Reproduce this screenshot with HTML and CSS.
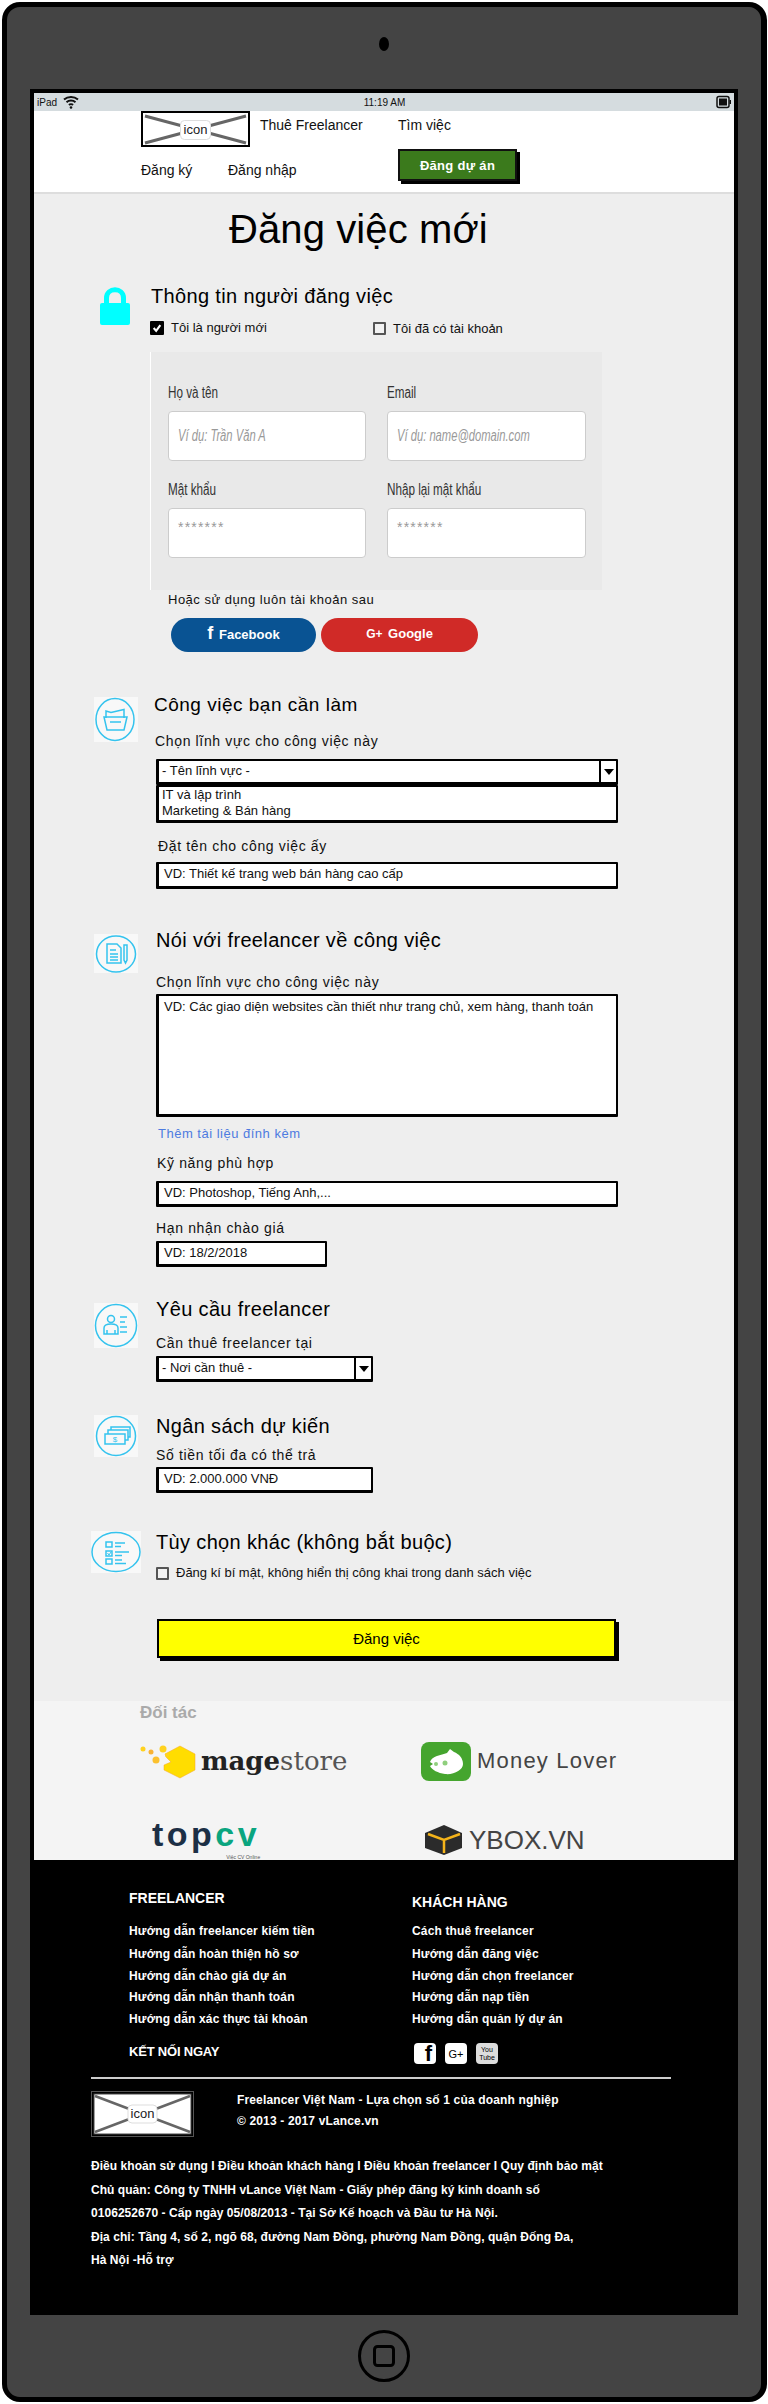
FILE: index.html
```html
<!DOCTYPE html>
<html lang="vi">
<head>
    <meta charset="UTF-8">
    <meta name="viewport" content="width=device-width, initial-scale=1.0">
    <title>Đăng việc mới</title>
    <link rel="stylesheet" href="styles.css">
</head>
<body>
<div class="device">
    <div class="device-top"><span class="camera"></span></div>
    <div class="screen">
        <div class="statusbar">
            <div class="status-left">
                <span>iPad</span>
                <svg width="16" height="14" viewBox="0 0 16 14"><path d="M1 4.5C5 1 11 1 15 4.5M3.5 7.2C6 5 10 5 12.5 7.2M6 10C7 9 9 9 10 10" fill="none" stroke="#111" stroke-width="2"/><circle cx="8" cy="12.5" r="1.3" fill="#111"/></svg>
            </div>
            <span class="status-time">11:19 AM</span>
            <svg class="battery" width="15" height="14" viewBox="0 0 15 14"><rect x="1" y="1.5" width="12" height="11" rx="2" fill="none" stroke="#111" stroke-width="1.5"/><rect x="3" y="3.5" width="8" height="7" fill="#111"/><rect x="13.5" y="5" width="1.5" height="4" fill="#111"/></svg>
        </div>

        <header class="topbar">
            <div class="topbar-row">
                <svg class="logo" width="109" height="36" viewBox="0 0 109 36">
                    <rect x="1" y="1" width="107" height="34" fill="#fff" stroke="#000" stroke-width="2"/>
                    <path d="M4 5L105 32M4 32L105 5" stroke="#666" stroke-width="3"/>
                    <rect x="39.5" y="9.5" width="30" height="19" rx="4" fill="#fff" stroke="#ddd"/>
                    <text x="54.5" y="23" text-anchor="middle" class="logo-text">icon</text>
                </svg>
                <a class="nav-link nav-hire">Thuê Freelancer</a>
                <a class="nav-link">Tìm việc</a>
            </div>
            <div class="topbar-row row-two">
                <a class="nav-link nav-signup">Đăng ký</a>
                <a class="nav-link nav-login">Đăng nhập</a>
                <button class="post-btn">Đăng dự án</button>
            </div>
        </header>

        <main class="content">
            <h1 class="page-title">Đăng việc mới</h1>

            <section class="sec sec-account">
                <svg class="lock" width="30" height="38" viewBox="0 0 30 38"><path d="M6.5 18V11C6.5 0 23.5 0 23.5 11V18" fill="none" stroke="#0ff" stroke-width="5"/><rect x="0" y="16" width="30" height="22" rx="2" fill="#0ff"/></svg>
                <div class="sec-body">
                    <h2 class="sec-title title-account">Thông tin người đăng việc</h2>
                    <div class="account-checks">
                        <label class="check small"><span class="box box-on"><svg width="12" height="12" viewBox="0 0 12 12"><path d="M2 6L5 9.5L10 2.5" fill="none" stroke="#fff" stroke-width="2.5"/></svg></span>Tôi là người mới</label>
                        <label class="check small check-old"><span class="box"></span>Tôi đã có tài khoản</label>
                    </div>
                    <div class="account-panel">
                        <div class="field">
                            <label>Họ và tên</label>
                            <div class="soft-input"><span class="ph">Ví dụ: Trần Văn A</span></div>
                        </div>
                        <div class="field">
                            <label>Email</label>
                            <div class="soft-input"><span class="ph">Ví dụ: name@domain.com</span></div>
                        </div>
                        <div class="field">
                            <label>Mật khẩu</label>
                            <div class="soft-input stars">*******</div>
                        </div>
                        <div class="field">
                            <label>Nhập lại mật khẩu</label>
                            <div class="soft-input stars">*******</div>
                        </div>
                    </div>
                    <p class="alt-login">Hoặc sử dụng luôn tài khoản sau</p>
                    <div class="social-btns">
                        <button class="social fb"><b class="fb-f">f</b> Facebook</button>
                        <button class="social gg"><b class="gg-g">G+</b> Google</button>
                    </div>
                </div>
            </section>

            <section class="sec sec-job">
                <svg class="round-icon" width="44" height="45" viewBox="0 0 44 45">
                    <rect width="44" height="45" fill="#f8f8f8"/>
                    <ellipse cx="21" cy="22.5" rx="19" ry="21" fill="none" stroke="#34c3ee" stroke-width="1.5"/>
                    <path d="M12 21V14L17 15.5L30 12.5V21M10 20H33L30 33H13ZM16 25H27" fill="none" stroke="#34c3ee" stroke-width="1.5"/>
                </svg>
                <div class="sec-body">
                    <h2 class="sec-title title-job">Công việc bạn cần làm</h2>
                    <div class="lab lab-job">Chọn lĩnh vực cho công việc này</div>
                    <div class="ink-select sel-job">- Tên lĩnh vực -<span class="arrow"></span></div>
                    <div class="ink-list">
                        <div>IT và lập trình</div>
                        <div>Marketing &amp; Bán hàng</div>
                    </div>
                    <div class="lab lab-name">Đặt tên cho công việc ấy</div>
                    <div class="ink-input inp-name">VD: Thiết kế trang web bán hàng cao cấp</div>
                </div>
            </section>

            <section class="sec sec-brief">
                <svg class="round-icon icon-brief" width="44" height="39" viewBox="0 0 44 39">
                    <rect width="44" height="39" fill="#f8f8f8"/>
                    <ellipse cx="22" cy="20" rx="19.5" ry="18" fill="none" stroke="#34c3ee" stroke-width="1.5"/>
                    <path d="M13 10H23L27 14V29H13ZM16 16H22M16 20H24M16 23H24M16 26H24M30 11H33V26L31.5 29L30 26Z" fill="none" stroke="#34c3ee" stroke-width="1.5"/>
                </svg>
                <div class="sec-body">
                    <h2 class="sec-title">Nói với freelancer về công việc</h2>
                    <div class="lab lab-brief">Chọn lĩnh vực cho công việc này</div>
                    <div class="ink-input ink-area">VD: Các giao diện websites cần thiết như trang chủ, xem hàng, thanh toán</div>
                    <a class="attach">Thêm tài liệu đính kèm</a>
                    <div class="lab lab-skill">Kỹ năng phù hợp</div>
                    <div class="ink-input inp-skill">VD: Photoshop, Tiếng Anh,...</div>
                    <div class="lab lab-date">Hạn nhận chào giá</div>
                    <div class="ink-input inp-date">VD: 18/2/2018</div>
                </div>
            </section>

            <section class="sec sec-req">
                <svg class="round-icon" width="44" height="45" viewBox="0 0 44 45">
                    <rect width="44" height="45" fill="#f8f8f8"/>
                    <ellipse cx="22" cy="22.5" rx="20.5" ry="21" fill="none" stroke="#34c3ee" stroke-width="1.5"/>
                    <circle cx="17" cy="16" r="3.5" fill="none" stroke="#34c3ee" stroke-width="1.5"/>
                    <path d="M10 31V25C10 22 13 21 17 21C21 21 24 22 24 25V31ZM13 27V31M21 27V31M26 14H33M26 19H31M26 24H33M26 29H33" fill="none" stroke="#34c3ee" stroke-width="1.5"/>
                </svg>
                <div class="sec-body">
                    <h2 class="sec-title">Yêu cầu freelancer</h2>
                    <div class="lab lab-req">Cần thuê freelancer tại</div>
                    <div class="ink-select ink-short sel-req">- Nơi cần thuê -<span class="arrow"></span></div>
                </div>
            </section>

            <section class="sec sec-budget">
                <svg class="round-icon" width="44" height="42" viewBox="0 0 44 42">
                    <rect width="44" height="42" fill="#f8f8f8"/>
                    <ellipse cx="22" cy="21" rx="19.5" ry="19.5" fill="none" stroke="#34c3ee" stroke-width="1.5"/>
                    <path d="M11 19H31V29H11ZM14 19V15H34V25H31M17 15V12H36V22H34" fill="none" stroke="#34c3ee" stroke-width="1.5"/>
                    <text x="21" y="27" text-anchor="middle" class="dollar">$</text>
                </svg>
                <div class="sec-body">
                    <h2 class="sec-title">Ngân sách dự kiến</h2>
                    <div class="lab lab-budget">Số tiền tối đa có thể trả</div>
                    <div class="ink-input ink-short inp-budget">VD: 2.000.000 VNĐ</div>
                </div>
            </section>

            <section class="sec sec-extra">
                <svg class="round-icon icon-extra" width="50" height="42" viewBox="0 0 50 42">
                    <rect width="50" height="42" fill="#f8f8f8"/>
                    <ellipse cx="25" cy="21" rx="24" ry="19.5" fill="none" stroke="#34c3ee" stroke-width="1.5"/>
                    <path d="M15 11H21V16H15ZM15 20H21V25H15ZM15 28H21V33H15ZM24 12H34M24 15.5H30M24 21H38M24 24.5H31M24 29H31M24 32.5H35" fill="none" stroke="#34c3ee" stroke-width="1.5"/>
                    <path d="M16.5 22L18 24L20 21" fill="none" stroke="#34c3ee"/>
                </svg>
                <div class="sec-body">
                    <h2 class="sec-title">Tùy chọn khác (không bắt buộc)</h2>
                    <label class="check small check-secret"><span class="box"></span>Đăng kí bí mật, không hiển thị công khai trong danh sách việc</label>
                    <button class="submit-btn">Đăng việc</button>
                </div>
            </section>
        </main>

        <section class="partners">
            <h3 class="partners-title">Đối tác</h3>
            <div class="partner-grid">
                <div class="partner">
                    <svg width="62" height="36" viewBox="0 0 62 36">
                        <path d="M40 3L55 11V27L40 35L24 27V22L31 19L26 14L25 11Z" fill="#ffdd00" stroke="#f6a623" stroke-width="0.5"/>
                        <circle cx="3" cy="6" r="2.5" fill="#ffd21f"/><circle cx="11" cy="9" r="2.5" fill="#f9b233"/><circle cx="23" cy="6" r="3.5" fill="#ffd21f"/><circle cx="16" cy="17" r="3.5" fill="#fbc02d"/><circle cx="27" cy="12" r="2" fill="#ffd21f"/>
                    </svg>
                    <span class="mage"><b>mage</b>store</span>
                </div>
                <div class="partner">
                    <svg width="50" height="39" viewBox="0 0 50 39">
                        <rect y="0" width="50" height="39" rx="8" fill="#45a52e"/>
                        <path d="M9 20C11 14 20 13 26 11L29 7L33 10C38 12 42 16 42 22C42 28 33 33 24 32C17 31 11 28 9 24L12 22Z" fill="#fff"/>
                        <circle cx="24" cy="21" r="2.5" fill="#8fcf7d"/><circle cx="15" cy="22" r="2" fill="#8fcf7d"/>
                    </svg>
                    <span class="money">Money Lover</span>
                </div>
                <div class="partner topcv-cell">
                    <div class="topcv">
                        <span class="topcv-mark">top<i>cv</i></span>
                        <small>Việc CV Online</small>
                    </div>
                </div>
                <div class="partner ybox-cell">
                    <svg width="38" height="30" viewBox="0 0 38 30">
                        <path d="M19 0L37 8V23L19 30L0 23V8Z" fill="#2b2b2b"/>
                        <path d="M3 9L19 15L35 9M19 15V28" fill="none" stroke="#f4b31a" stroke-width="2.5"/>
                    </svg>
                    <span class="ybox">YBOX.VN</span>
                </div>
            </div>
        </section>

        <footer class="footer">
            <div class="footer-cols">
                <div class="footer-col">
                    <h4>FREELANCER</h4>
                    <ul>
                        <li>Hướng dẫn freelancer kiếm tiền</li>
                        <li>Hướng dẫn hoàn thiện hồ sơ</li>
                        <li>Hướng dẫn chào giá dự án</li>
                        <li>Hướng dẫn nhận thanh toán</li>
                        <li>Hướng dẫn xác thực tài khoản</li>
                    </ul>
                </div>
                <div class="footer-col col-client">
                    <h4>KHÁCH HÀNG</h4>
                    <ul>
                        <li>Cách thuê freelancer</li>
                        <li>Hướng dẫn đăng việc</li>
                        <li>Hướng dẫn chọn freelancer</li>
                        <li>Hướng dẫn nạp tiền</li>
                        <li>Hướng dẫn quản lý dự án</li>
                    </ul>
                </div>
                <h4 class="connect">KẾT NỐI NGAY</h4>
                <div class="social-icons">
                    <span class="s-icon s-fb">f</span>
                    <span class="s-icon s-gg">G+</span>
                    <span class="s-icon s-yt">You<br>Tube</span>
                </div>
            </div>
            <div class="footer-bottom">
                <hr class="footer-line">
                <div class="footer-brand">
                    <svg width="103" height="46" viewBox="0 0 103 46">
                        <rect x="0.5" y="0.5" width="102" height="45" fill="#000" stroke="#555"/>
                        <rect x="3" y="3" width="97" height="40" fill="#fff" stroke="#444"/>
                        <path d="M4 5L99 41M4 41L99 5" stroke="#666" stroke-width="2.5"/>
                        <rect x="37" y="14" width="29" height="18" rx="4" fill="#fff" stroke="#ddd"/>
                        <text x="51.5" y="27" text-anchor="middle" class="logo-text">icon</text>
                    </svg>
                    <p>Freelancer Việt Nam - Lựa chọn số 1 của doanh nghiệp<br>© 2013 - 2017 vLance.vn</p>
                </div>
                <p class="legal">Điều khoản sử dụng I Điều khoản khách hàng I Điều khoản freelancer I Quy định bảo mật<br>
                Chủ quản: Công ty TNHH vLance Việt Nam - Giấy phép đăng ký kinh doanh số<br>
                0106252670 - Cấp ngày 05/08/2013 - Tại Sở Kế hoạch và Đầu tư Hà Nội.<br>
                Địa chỉ: Tầng 4, số 2, ngõ 68, đường Nam Đồng, phường Nam Đồng, quận Đống Đa,<br>
                Hà Nội -Hỗ trợ</p>
            </div>
        </footer>
    </div>
    <div class="device-bottom">
        <svg width="52" height="52" viewBox="0 0 52 52"><circle cx="26" cy="26" r="24.5" fill="none" stroke="#000" stroke-width="3"/><rect x="16.5" y="16.5" width="19" height="19" rx="3" fill="none" stroke="#000" stroke-width="3"/></svg>
    </div>
</div>
</body>
</html>
```

FILE: styles.css
```css
* {
    box-sizing: border-box;
}
body {
    margin: 0;
    background: #fff;
    font-family: "Liberation Sans", Arial, sans-serif;
    color: #111;
    font-size: 14px;
}
h1, h2, h3, h4, p, ul {
    margin: 0;
    padding: 0;
    font-weight: normal;
}
ul {
    list-style: none;
}
button {
    font-family: inherit;
    cursor: pointer;
}

/* device frame */
.device {
    width: 765px;
    height: 2400px;
    margin: 2px 0 0 2px;
    padding: 0 23px;
    background: #444;
    border: solid #000;
    border-width: 5px 6px 5px 5px;
    border-radius: 18px;
}
.device-top {
    height: 82px;
    padding-bottom: 8px;
    display: flex;
    align-items: center;
    justify-content: center;
}
.camera {
    width: 10px;
    height: 14px;
    border-radius: 50%;
    background: #000;
}
.screen {
    height: 2226px;
    border: solid #000;
    border-width: 4px 4px 0;
    background: #eee;
}
.device-bottom {
    height: 82px;
    display: flex;
    align-items: center;
    justify-content: center;
}

/* status bar */
.statusbar {
    height: 18px;
    padding: 0 3px;
    background: #d5dcdf;
    display: flex;
    align-items: center;
    justify-content: space-between;
    font-size: 10px;
}
.status-left {
    width: 60px;
    display: flex;
    align-items: center;
    gap: 6px;
}
.battery {
    margin-left: 44px;
}

/* top bar */
.topbar {
    height: 83px;
    padding-left: 107px;
    background: #fff;
    border-bottom: 2px solid #ddd;
}
.topbar-row {
    display: flex;
    align-items: flex-start;
    height: 36px;
}
.row-two {
    height: 45px;
    align-items: center;
}
.logo-text {
    font-size: 13px;
    fill: #222;
}
.nav-link {
    font-size: 14px;
    line-height: 28px;
    color: #111;
}
.nav-hire {
    width: 138px;
    margin-left: 10px;
}
.nav-signup {
    width: 87px;
    margin-top: 1px;
}
.nav-login {
    width: 170px;
    margin-top: 1px;
}
.post-btn {
    width: 119px;
    height: 32px;
    margin-top: -9px;
    background: #3b7a1c;
    border: 2px solid #111;
    box-shadow: 3px 3px 0 #000;
    color: #fff;
    font-size: 13px;
    font-weight: bold;
    letter-spacing: 0.3px;
    padding: 0;
}

/* form */
.content {
    height: 1507px;
    background: #eee;
}
.page-title {
    height: 70px;
    margin-left: 195px;
    font-size: 40px;
    line-height: 70px;
    letter-spacing: 0.1px;
    color: #000;
}
.sec {
    display: grid;
    grid-template-columns: 122px 1fr;
    align-items: start;
}
.sec-account {
    margin-top: 20px;
    grid-template-columns: 116px 1fr;
}
.sec-job {
    margin-top: 41px;
}
.sec-brief {
    margin-top: 39px;
}
.sec-req {
    margin-top: 30px;
}
.sec-budget {
    margin-top: 32px;
}
.sec-extra {
    margin-top: 37px;
}
.lock {
    margin: 3px 0 0 66px;
}
.round-icon {
    margin: 4px 0 0 60px;
}
.sec-brief .round-icon {
    margin-top: 6px;
}
.sec-req .round-icon {
    margin-top: 6px;
}
.sec-budget .round-icon {
    margin-top: 1px;
}
.sec-extra .icon-extra {
    margin: 1px 0 0 57px;
}
.sec-title {
    font-size: 20px;
    line-height: 24px;
    letter-spacing: 0.35px;
    color: #000;
    white-space: nowrap;
}
.title-account {
    margin-left: 1px;
}
.title-job {
    margin-left: -2px;
    font-size: 19px;
    letter-spacing: 0.5px;
}
.lab {
    font-size: 14px;
    line-height: 18px;
    letter-spacing: 0.65px;
    color: #111;
    white-space: nowrap;
}
.lab-job {
    margin: 15px 0 0 -1px;
}
.lab-name {
    margin: 14px 0 0 2px;
}
.lab-brief {
    margin-top: 21px;
}
.lab-skill {
    margin: 11px 0 0 1px;
}
.lab-date {
    margin-top: 12px;
}
.lab-req {
    margin-top: 13px;
}
.lab-budget {
    margin-top: 8px;
}

.check {
    display: flex;
    align-items: center;
    gap: 7px;
    white-space: nowrap;
}
.small {
    font-size: 13px;
    line-height: 16px;
}
.box {
    width: 13px;
    height: 13px;
    background: #f2f2f2;
    border: 2px solid #555;
    border-radius: 1px;
    display: flex;
    align-items: center;
    justify-content: center;
}
.box-on {
    width: 14px;
    height: 14px;
    background: #000;
    border-color: #000;
}
.account-checks {
    margin-top: 12px;
    display: flex;
    height: 16px;
}
.account-checks .check {
    width: 223px;
}
.check-old {
    margin-top: 1px;
}
.account-panel {
    width: 452px;
    height: 238px;
    margin-top: 16px;
    padding: 32px 0 0 17px;
    background: #e9e9e9;
    border-left: 1px solid #fff;
    display: grid;
    grid-template-columns: 198px 199px;
    grid-template-rows: 77px 77px;
    column-gap: 21px;
    row-gap: 20px;
}
/* condensed look of the original web font, squeezed from Liberation */
.field label {
    display: block;
    font-size: 16px;
    line-height: 18px;
    color: #333;
    white-space: nowrap;
    transform: scaleX(0.73);
    transform-origin: left;
}
.soft-input {
    height: 50px;
    margin-top: 9px;
    padding: 0 9px;
    background: #fff;
    border: 1px solid #ccc;
    border-radius: 4px;
    color: #999;
    font-size: 14px;
    line-height: 48px;
    white-space: nowrap;
}
.ph {
    display: inline-block;
    font-size: 16px;
    font-style: italic;
    transform: scaleX(0.7);
    transform-origin: left;
}
.stars {
    line-height: 36px;
    letter-spacing: 1.2px;
}
.alt-login {
    margin-left: 18px;
    font-size: 13px;
    line-height: 20px;
    letter-spacing: 0.5px;
}
.social-btns {
    margin: 8px 0 0 21px;
    display: flex;
    gap: 5px;
}
.social {
    height: 34px;
    border: none;
    border-radius: 17px;
    color: #fff;
    font-size: 13px;
    font-weight: bold;
    padding: 0 0 3px;
}
.fb {
    width: 145px;
    background: #095393;
}
.fb-f {
    font-size: 18px;
    margin-right: 2px;
}
.gg {
    width: 157px;
    background: #d02a27;
}
.gg-g {
    font-size: 12px;
    margin-right: 2px;
}

.ink-select, .ink-input, .ink-list {
    width: 462px;
    background: #fff;
    border: solid #000;
    border-width: 2px 2px 3px 3px;
    border-radius: 1px;
    font-size: 13px;
    color: #111;
    white-space: nowrap;
}
.ink-select {
    height: 26px;
    padding-left: 3px;
    line-height: 20px;
    display: flex;
    justify-content: space-between;
}
.sel-job {
    margin-top: 9px;
}
.sel-req {
    margin-top: 4px;
}
.ink-select.ink-short, .ink-input.ink-short {
    width: 217px;
}
.arrow {
    width: 17px;
    height: 100%;
    border-left: 2px solid #000;
    background: #fff;
    display: flex;
    align-items: center;
    justify-content: center;
}
.arrow::after {
    content: "";
    border: 5px solid transparent;
    border-top: 6px solid #000;
    border-bottom: 0;
}
.ink-list {
    height: 38px;
    padding-left: 3px;
    line-height: 16px;
}
.ink-input {
    height: 26px;
    padding-left: 5px;
    line-height: 20px;
}
.inp-name {
    height: 27px;
    margin-top: 7px;
}
.ink-area {
    height: 123px;
    margin-top: 3px;
    padding-top: 1px;
}
.attach {
    display: block;
    margin: 8px 0 0 2px;
    font-size: 13px;
    line-height: 18px;
    letter-spacing: 0.5px;
    color: #4d7be0;
}
.inp-skill {
    margin-top: 9px;
}
.inp-date {
    width: 171px;
    margin-top: 4px;
}
.inp-budget {
    margin-top: 3px;
}
.dollar {
    font-size: 8px;
    fill: #34c3ee;
}
.check-secret {
    margin-top: 11px;
}
.submit-btn {
    display: block;
    width: 459px;
    height: 39px;
    margin: 38px 0 0 1px;
    background: #ff0;
    border: 2px solid #000;
    box-shadow: 3px 3px 0 #000;
    font-size: 15px;
    color: #000;
    padding: 0;
}

/* partners */
.partners {
    height: 159px;
    padding: 2px 0 0 106px;
    background: #f4f4f4;
}
.partners-title {
    font-size: 17px;
    line-height: 20px;
    font-weight: bold;
    color: #aaa;
}
.partner-grid {
    margin-top: 20px;
    display: grid;
    grid-template-columns: 281px 1fr;
    grid-template-rows: 36px 36px;
    row-gap: 43px;
}
.partner {
    display: flex;
    align-items: center;
    gap: 6px;
}
.mage {
    margin-left: -7px;
    font-family: "DejaVu Serif", serif;
    font-size: 26px;
    color: #555;
}
.mage b {
    color: #222;
}
.money {
    font-size: 22px;
    letter-spacing: 1.2px;
    color: #444;
}
.topcv-cell {
    padding-left: 12px;
    align-items: flex-start;
}
.topcv {
    margin-top: -7px;
    display: flex;
    flex-direction: column;
    align-items: flex-end;
}
.topcv-mark {
    font-size: 34px;
    line-height: 39px;
    letter-spacing: 3.5px;
    font-weight: bold;
    color: #1c2f45;
}
.topcv-mark i {
    font-style: normal;
    color: #0aa57f;
}
.topcv small {
    display: block;
    font-size: 5px;
    line-height: 6px;
    color: #555;
}
.ybox-cell {
    padding-left: 4px;
}
.ybox {
    font-size: 26px;
    color: #444;
}

/* footer */
.footer {
    height: 455px;
    background: #000;
    color: #fff;
    padding-top: 28px;
}
.footer h4 {
    font-size: 14px;
    line-height: 20px;
    font-weight: bold;
}
.footer-cols {
    padding-left: 95px;
    display: grid;
    grid-template-columns: 283px 1fr;
    grid-template-rows: 154px 36px;
}
.footer-col ul {
    margin-top: 13px;
}
.col-client {
    padding-top: 4px;
}
.col-client ul {
    margin-top: 9px;
}
.footer-col li {
    font-size: 12px;
    font-weight: bold;
    line-height: 21.5px;
    letter-spacing: 0.15px;
    white-space: nowrap;
}
.footer-col li:first-child {
    margin-bottom: 1.5px;
}
.footer h4.connect {
    font-size: 13px;
    letter-spacing: -0.2px;
}
.social-icons {
    display: flex;
    gap: 9px;
    padding-top: 1px;
    margin-left: 2px;
}
.s-icon {
    width: 22px;
    height: 21px;
    background: #fff;
    color: #000;
    border-radius: 4px;
    display: flex;
    align-items: center;
    justify-content: center;
    text-align: center;
}
.s-fb {
    font-size: 22px;
    font-weight: bold;
    align-items: flex-end;
    justify-content: flex-end;
    padding-right: 4px;
    line-height: 20px;
}
.s-gg {
    font-size: 11px;
}
.s-yt {
    font-size: 7px;
    line-height: 8px;
    background: #ddd;
}
.footer-bottom {
    padding-left: 57px;
}
.footer-line {
    width: 580px;
    height: 2px;
    margin: -1px 0 0;
    border: 0;
    background: #ccc;
}
.footer-brand {
    margin-top: 12px;
    display: flex;
    align-items: flex-start;
}
.footer-brand p {
    margin: -1px 0 0 43px;
    font-size: 12px;
    font-weight: bold;
    line-height: 21px;
    letter-spacing: 0.15px;
    white-space: nowrap;
}
.legal {
    margin-top: 18px;
    font-size: 12px;
    font-weight: bold;
    line-height: 23.5px;
    letter-spacing: 0.05px;
    white-space: nowrap;
}
```
